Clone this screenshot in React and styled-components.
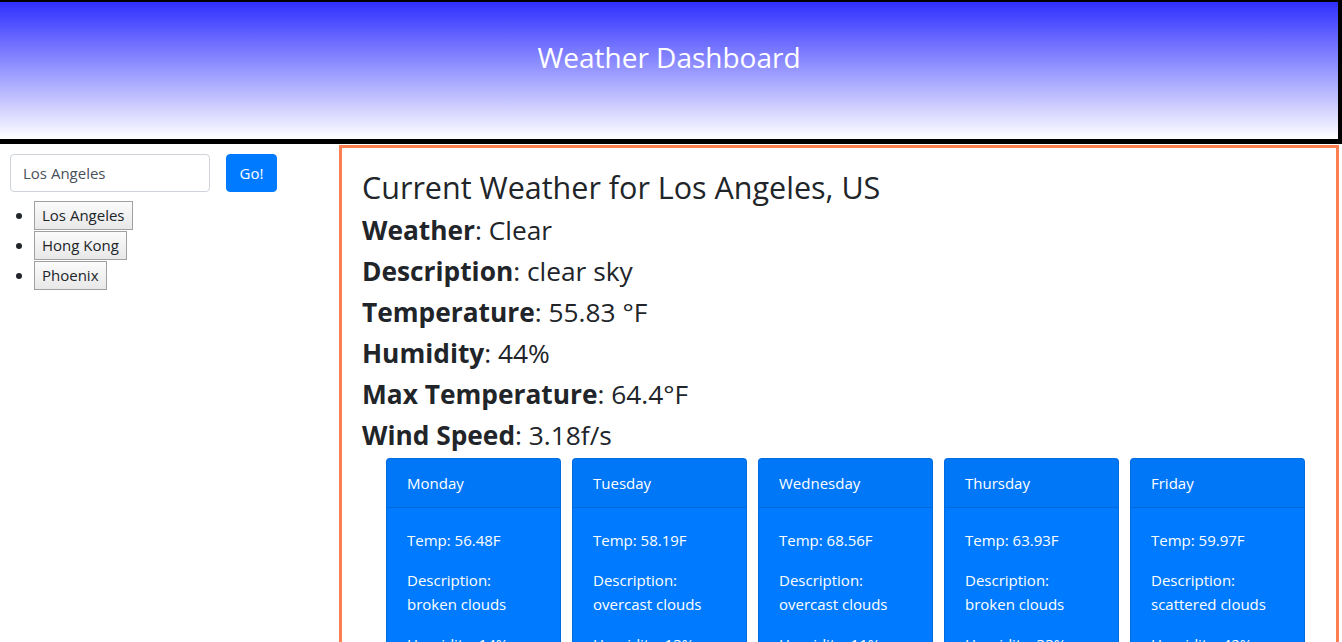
import React from 'react';
import styled, { createGlobalStyle } from 'styled-components';

const GlobalStyle = createGlobalStyle`
  body {
    margin: 0;
    font-family: "Open Sans", "Noto Sans", sans-serif;
    font-size: 16px;
    line-height: 1.5;
    color: #212529;
    background: #fff;
  }
  * { box-sizing: border-box; }
`;

const Header = styled.header`
  height: 144px;
  border-top: 2px solid #000;
  border-right: 4px solid #000;
  border-bottom: 5px solid #000;
  background: linear-gradient(to bottom, #3030ff, #ffffff);
  display: flex;
  align-items: center;
  justify-content: center;
  padding-bottom: 28px;
`;

const Title = styled.h1`
  margin: 0;
  color: #fff;
  font-size: 28px;
  font-weight: 400;
`;

const Layout = styled.div`
  display: grid;
  grid-template-columns: 339px 1000px;
`;

const Sidebar = styled.aside`
  padding: 10px;
`;

const SearchRow = styled.form`
  display: flex;
  gap: 16px;
`;

const SearchInput = styled.input`
  width: 200px;
  height: 38px;
  padding: 6px 12px;
  font: inherit;
  font-size: 15px;
  color: #495057;
  border: 1px solid #ced4da;
  border-radius: 4px;
`;

const GoButton = styled.button`
  width: 51px;
  height: 38px;
  font: inherit;
  font-size: 15px;
  color: #fff;
  background: #007bff;
  border: 1px solid #007bff;
  border-radius: 4px;
`;

const CityList = styled.ul`
  margin: 9px 0 0;
  padding-left: 24px;
`;

const CityItem = styled.li`
  height: 30px;
`;

const CityButton = styled.button`
  font: inherit;
  font-size: 15px;
  color: #212529;
  padding: 0 7px;
  height: 29px;
  border: 1px solid #a0a0a0;
  border-radius: 0;
  background: linear-gradient(#fbfbfb, #e8e8e8);
`;

const Main = styled.main`
  border: 3px solid #ff7f50;
  border-bottom: none;
  margin-top: 1px;
  padding: 21px 20px 0 20px;
  min-height: 500px;
`;

const Heading = styled.h3`
  margin: 0 0 8px;
  font-size: 30.5px;
  font-weight: 500;
  line-height: 36px;
`;

const Stat = styled.h3`
  margin: 0 0 7px;
  font-size: 26.3px;
  font-weight: 400;
  line-height: 34px;

  b { font-weight: 700; }
`;

const Cards = styled.div`
  display: flex;
  gap: 11px;
  padding-left: 24px;
  margin-top: -1px;
`;

const Card = styled.div`
  width: 175px;
  background: #007bff;
  color: #fff;
  border: 1px solid rgba(0, 0, 0, 0.125);
  border-radius: 4px;
  overflow: hidden;
  font-size: 15px;
  line-height: 24px;
`;

const CardHeader = styled.div`
  padding: 12px 20px;
  background: rgba(0, 0, 0, 0.03);
  border-bottom: 1px solid rgba(0, 0, 0, 0.125);
`;

const CardBody = styled.div`
  padding: 20px;

  p { margin: 0 0 16px; }
  span { display: block; }
`;

const forecast = [
  { day: 'Monday', temp: '56.48F', desc: 'broken clouds', hum: '14%' },
  { day: 'Tuesday', temp: '58.19F', desc: 'overcast clouds', hum: '13%' },
  { day: 'Wednesday', temp: '68.56F', desc: 'overcast clouds', hum: '11%' },
  { day: 'Thursday', temp: '63.93F', desc: 'broken clouds', hum: '33%' },
  { day: 'Friday', temp: '59.97F', desc: 'scattered clouds', hum: '42%' },
];

const stats = [
  ['Weather', 'Clear'],
  ['Description', 'clear sky'],
  ['Temperature', '55.83 °F'],
  ['Humidity', '44%'],
  ['Max Temperature', '64.4°F'],
  ['Wind Speed', '3.18f/s'],
];

export default function App() {
  return (
    <>
      <GlobalStyle />
      <Header>
        <Title>Weather Dashboard</Title>
      </Header>
      <Layout>
        <Sidebar>
          <SearchRow onSubmit={(e) => e.preventDefault()}>
            <SearchInput defaultValue="Los Angeles" />
            <GoButton type="submit">Go!</GoButton>
          </SearchRow>
          <CityList>
            {['Los Angeles', 'Hong Kong', 'Phoenix'].map((c) => (
              <CityItem key={c}>
                <CityButton>{c}</CityButton>
              </CityItem>
            ))}
          </CityList>
        </Sidebar>
        <Main>
          <Heading>Current Weather for Los Angeles, US</Heading>
          {stats.map(([k, v]) => (
            <Stat key={k}>
              <b>{k}</b>: {v}
            </Stat>
          ))}
          <Cards>
            {forecast.map((f) => (
              <Card key={f.day}>
                <CardHeader>{f.day}</CardHeader>
                <CardBody>
                  <p>Temp: {f.temp}</p>
                  <p>
                    <span>Description:</span>
                    <span>{f.desc}</span>
                  </p>
                  <p>Humidity: {f.hum}</p>
                </CardBody>
              </Card>
            ))}
          </Cards>
        </Main>
      </Layout>
    </>
  );
}
